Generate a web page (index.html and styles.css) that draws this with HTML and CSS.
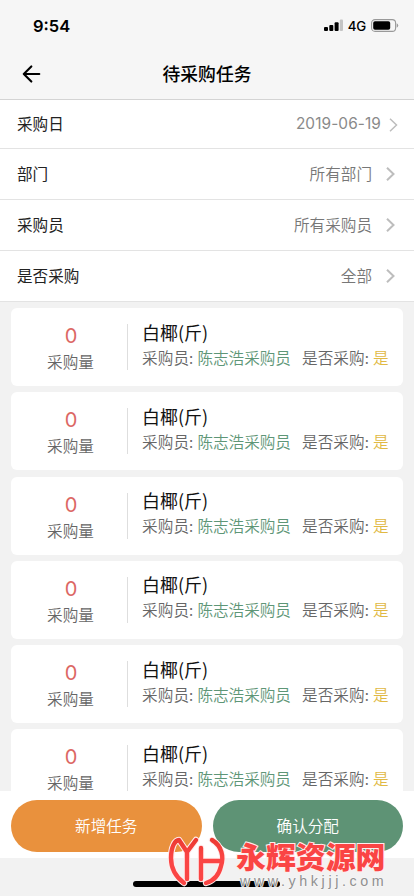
FILE: index.html
```html
<!DOCTYPE html>
<html lang="zh-CN">
<head>
<meta charset="utf-8">
<meta name="viewport" content="width=device-width, initial-scale=1">
<title>待采购任务</title>
<link rel="stylesheet" href="styles.css">
</head>
<body>
<div class="app">
  <header class="header">
    <div class="status">
      <span class="time">9:54</span>
      <div class="indicators">
        <svg width="20" height="13" viewBox="0 0 20 13"><rect x="0" y="8" width="4" height="4" rx="1"/><rect x="5.3" y="6" width="4" height="6" rx="1"/><rect x="10.6" y="3.2" width="4" height="8.8" rx="1"/><rect x="15.8" y="0.5" width="3.2" height="11.5" rx="1" fill="#c4c4c4"/></svg>
        <span class="network">4G</span>
        <svg width="28" height="13" viewBox="0 0 28 13"><rect x=".6" y=".6" width="24" height="11.8" rx="3.4" fill="none" stroke="#999" stroke-width="1.1"/><rect x="2.2" y="2.3" width="17" height="8.4" rx="1.8"/><path d="M25.7 4.3q1.5 1 1.5 2.2t-1.5 2.2z" fill="#999"/></svg>
      </div>
    </div>
    <div class="nav">
      <svg class="back" width="20" height="18" viewBox="0 0 20 18"><path d="M9.3 1.4 1.8 9l7.5 7.6M2 9h15.3" fill="none" stroke="#000" stroke-width="2.1" stroke-linecap="round" stroke-linejoin="round"/></svg>
      <h1>待采购任务</h1>
    </div>
  </header>
  <section class="filters">
    <div class="filter date"><span>采购日</span><span class="value">2019-06-19</span><svg class="chevron" width="9" height="14" viewBox="0 0 9 14"><path d="M1 .8 7.5 7 1 13.2"/></svg></div>
    <div class="filter"><span>部门</span><span class="value">所有部门</span><svg class="chevron" width="9" height="14" viewBox="0 0 9 14"><path d="M1 .8 7.5 7 1 13.2"/></svg></div>
    <div class="filter"><span>采购员</span><span class="value">所有采购员</span><svg class="chevron" width="9" height="14" viewBox="0 0 9 14"><path d="M1 .8 7.5 7 1 13.2"/></svg></div>
    <div class="filter"><span>是否采购</span><span class="value">全部</span><svg class="chevron" width="9" height="14" viewBox="0 0 9 14"><path d="M1 .8 7.5 7 1 13.2"/></svg></div>
  </section>
  <main class="tasks">
    <article class="task"><div class="amount"><b>0</b><span>采购量</span></div><div class="info"><h2>白椰(斤)</h2><p><span class="key">采购员:</span><span class="buyer">陈志浩采购员</span><span class="key">是否采购:</span><span class="yes">是</span></p></div></article>
    <article class="task"><div class="amount"><b>0</b><span>采购量</span></div><div class="info"><h2>白椰(斤)</h2><p><span class="key">采购员:</span><span class="buyer">陈志浩采购员</span><span class="key">是否采购:</span><span class="yes">是</span></p></div></article>
    <article class="task"><div class="amount"><b>0</b><span>采购量</span></div><div class="info"><h2>白椰(斤)</h2><p><span class="key">采购员:</span><span class="buyer">陈志浩采购员</span><span class="key">是否采购:</span><span class="yes">是</span></p></div></article>
    <article class="task"><div class="amount"><b>0</b><span>采购量</span></div><div class="info"><h2>白椰(斤)</h2><p><span class="key">采购员:</span><span class="buyer">陈志浩采购员</span><span class="key">是否采购:</span><span class="yes">是</span></p></div></article>
    <article class="task"><div class="amount"><b>0</b><span>采购量</span></div><div class="info"><h2>白椰(斤)</h2><p><span class="key">采购员:</span><span class="buyer">陈志浩采购员</span><span class="key">是否采购:</span><span class="yes">是</span></p></div></article>
    <article class="task"><div class="amount"><b>0</b><span>采购量</span></div><div class="info"><h2>白椰(斤)</h2><p><span class="key">采购员:</span><span class="buyer">陈志浩采购员</span><span class="key">是否采购:</span><span class="yes">是</span></p></div></article>
  </main>
  <footer class="actions">
    <button class="add">新增任务</button>
    <button class="confirm">确认分配</button>
  </footer>
  <div class="home-area"><div class="home-bar"></div></div>
  <div class="watermark">
    <svg class="mark" width="60" height="54" viewBox="0 0 60 54">
      <defs><linearGradient id="red" x1="0" y1="0" x2="0" y2="54" gradientUnits="userSpaceOnUse"><stop offset="0" stop-color="#e8382e"/><stop offset=".4" stop-color="#fa4544"/><stop offset="1" stop-color="#fa4544"/></linearGradient>
      <g id="emblem" fill="none" stroke-linecap="round" stroke-linejoin="round"><path d="M17 48C9 42 4 33 4 23 4 12 8 5 12 5L20 17 29 5M20 17V44M34 13V44M34 26H54M45 5C55 11 57 22 54 31 52 40 46 46 39 48"/></g></defs>
      <use href="#emblem" stroke="#ffeded" stroke-width="6.4"/><use href="#emblem" stroke="url(#red)" stroke-width="4.4"/>
    </svg>
    <div class="site-name">永辉资源网</div>
    <div class="site-url">www.yhkjjj.com</div>
  </div>
</div>
</body>
</html>
```
FILE: styles.css
```css
* { box-sizing: border-box; }
body { margin: 0; font-family: "Noto Sans CJK SC", sans-serif; font-size: 15.6px; color: #222; }
h1, h2, p { margin: 0; }
.app { position: relative; width: 414px; height: 896px; overflow: hidden; display: flex; flex-direction: column; background: #f2f2f2; }
.header { height: 100px; flex: none; background: #f6f6f6; border-bottom: 1px solid #d4d4d4; }
.status { height: 48px; padding: 3px 15px 0 33px; display: flex; align-items: center; justify-content: space-between; font-family: Inter, sans-serif; color: #000; }
.time { font-size: 16.5px; font-weight: 600; }
.indicators { display: flex; align-items: center; }
.network { margin: 0 5px 0 4px; font-size: 13.3px; font-weight: 500; letter-spacing: -.2px; }
.nav { height: 51px; display: grid; grid-template-columns: 42px 1fr 42px; align-items: center; }
.back { margin-left: 22px; }
h1 { padding-bottom: 2px; font-size: 17.8px; line-height: 26px; font-weight: 500; text-align: center; color: #000; }
.filters { flex: none; background: #fff; }
.filter { height: 51px; padding: 0 19px 0 17px; display: flex; align-items: center; border-bottom: 1px solid #e3e3e3; }
.filter span { padding-bottom: 2px; }
.filter.date { height: 49px; padding-right: 16px; }
.value { margin-left: auto; color: #777; font-weight: 350; }
.date .value { font-family: Inter, sans-serif; font-size: 15.4px; font-weight: 400; letter-spacing: .1px; color: #8a8a8a; }
.chevron { margin-left: 14px; fill: none; stroke: #bdbdbd; stroke-width: 2; }
.date .chevron { margin-left: 8px; position: relative; top: 1px; stroke-width: 1.5; }
.tasks { flex: 1; min-height: 0; overflow: hidden; padding: 6px 11px 0; display: flex; flex-direction: column; gap: 6.3px; }
.task { height: 78px; flex: none; display: flex; align-items: center; background: #fff; border-radius: 6px; }
.amount { width: 117px; height: 46px; border-right: 1px solid #dedede; display: flex; flex-direction: column; align-items: center; color: #666; font-weight: 350; }
.amount b { height: 25px; margin-left: 4px; font: 400 20px/24px Inter, sans-serif; color: #dc6864; }
.amount span { line-height: 26px; margin-left: 3px; }
.info { padding: 0 0 5px 14px; }
h2 { font-size: 18px; line-height: 25px; font-weight: 400; color: #111; }
.info p { display: flex; line-height: 25px; font-weight: 350; white-space: nowrap; }
.key { color: #666; letter-spacing: .1px; }
.buyer { margin: 0 11px 0 4px; color: #5e9677; }
.yes { margin-left: 4px; color: #e1b943; }
.actions { height: 67px; flex: none; padding: 9px 11px 6px; display: flex; gap: 11px; background: #fff; }
button { flex: 1; padding: 0 0 3px; border: 0; border-radius: 26px; color: #fff; font: 350 15.6px "Noto Sans CJK SC", sans-serif; }
.add { background: #e9913d; }
.confirm { background: #5e9375; }
.home-area { height: 38px; flex: none; display: flex; justify-content: center; padding-top: 23px; }
.home-bar { width: 147px; height: 6px; border-radius: 3px; background: #000; margin-right: 1px; }
.watermark { position: absolute; left: 167px; top: 835px; width: 230px; height: 58px; }
.mark { display: block; }
.site-name { position: absolute; left: 69px; top: 2px; font-size: 29.9px; line-height: 36px; font-weight: 900; white-space: nowrap; color: #fa4544; -webkit-text-stroke: 2px #ffeded; paint-order: stroke fill; }
.site-url { position: absolute; left: 73px; top: 38px; font: 14.3px/17px "Liberation Sans", sans-serif; letter-spacing: 3.6px; white-space: nowrap; color: #909090; -webkit-text-stroke: 1.5px #f6f6f6; paint-order: stroke fill; }
```
